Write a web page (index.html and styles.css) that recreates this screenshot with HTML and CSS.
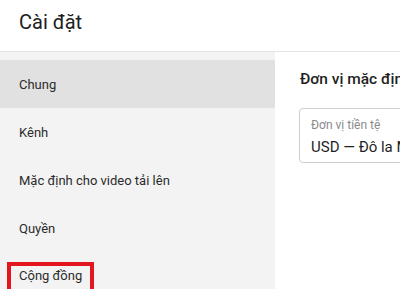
FILE: index.html
```html
<!DOCTYPE html>
<html lang="vi">
<head>
<meta charset="utf-8">
<link rel="stylesheet" href="styles.css">
</head>
<body>
<div class="app">
  <header class="header"><h1 class="title">Cài đặt</h1></header>
  <div class="main">
    <nav class="sidebar">
      <div class="item selected">Chung</div>
      <div class="item">Kênh</div>
      <div class="item">Mặc định cho video tải lên</div>
      <div class="item">Quyền</div>
      <div class="item last"><span class="highlight">Cộng đồng</span></div>
    </nav>
    <section class="content">
      <h2 class="section-title">Đơn vị mặc định</h2>
      <div class="field">
        <div class="field-label">Đơn vị tiền tệ</div>
        <div class="field-value">USD — Đô la Mỹ</div>
      </div>
    </section>
  </div>
</div>
</body>
</html>
```
FILE: styles.css
```css
html, body { margin: 0; padding: 0; }
body {
  font-family: Roboto, "Noto Sans", Arial, sans-serif;
  background: #fff;
  color: #282828;
  width: 400px;
  height: 289px;
  overflow: hidden;
}
.app { display: flex; flex-direction: column; height: 289px; }
.header {
  border-bottom: 1px solid #e4e4e4;
  display: flex;
  align-items: center;
  padding-left: 19px;
  box-sizing: border-box;
  flex: none;
  height: 52px;
}
.title {
  margin: 0;
  font-size: 20px;
  font-weight: 400;
  color: #202020;
  position: relative;
  top: -4px;
}
.main { display: flex; flex: 1; min-height: 0; }
.sidebar {
  width: 275px;
  flex: none;
  background: #f3f3f3;
  padding-top: 8px;
}
.item {
  height: 48px;
  display: flex;
  align-items: center;
  padding-left: 19px;
  font-size: 13px;
  color: #2b2b2b;
  white-space: nowrap;
}
.item.selected { background: #e1e1e1; }
.item.last { padding-left: 7px; align-items: flex-start; padding-top: 10px; box-sizing: border-box; }
.highlight {
  display: inline-block;
  border: 4px solid #e3161f;
  padding: 2px 8px 12px 8px;
  line-height: 15px;
}
.content {
  flex: 1;
  padding-left: 25px;
  padding-top: 17px;
  white-space: nowrap;
  overflow: hidden;
}
.section-title {
  margin: 0;
  font-size: 15.5px;
  font-weight: 500;
  color: #1f1f1f;
  height: 20px;
  line-height: 20px;
}
.field {
  margin-top: 19px;
  margin-left: -1px;
  width: 200px;
  height: 55px;
  box-sizing: border-box;
  border: 1px solid #cfcfcf;
  border-radius: 4px;
  padding: 9px 0 0 11px;
}
.field-label { font-size: 12px; color: #8a8a8a; line-height: 14px; }
.field-value { font-size: 15px; color: #1f1f1f; line-height: 20px; margin-top: 5px; }
```
